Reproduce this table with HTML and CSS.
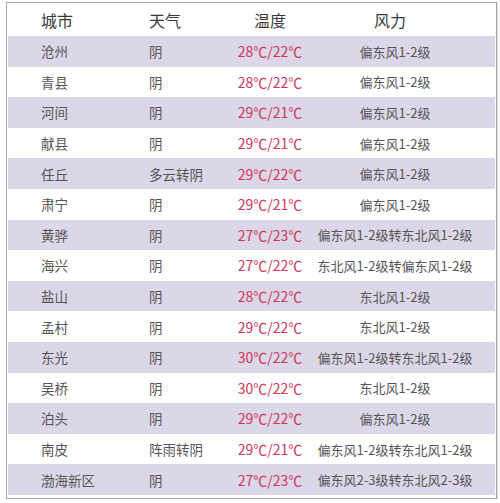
FILE: index.html
```html
<!DOCTYPE html>
<html lang="zh">
<head>
<meta charset="utf-8">
<link rel="stylesheet" href="styles.css">
</head>
<body>
<div class="table">
  <div class="row head">
    <div class="c1">城市</div><div class="c2">天气</div><div class="c3">温度</div><div class="c4">风力</div>
  </div>
  <div class="row alt"><div class="c1">沧州</div><div class="c2">阴</div><div class="c3 t">28℃/22℃</div><div class="c4">偏东风1-2级</div></div>
  <div class="row"><div class="c1">青县</div><div class="c2">阴</div><div class="c3 t">28℃/22℃</div><div class="c4">偏东风1-2级</div></div>
  <div class="row alt"><div class="c1">河间</div><div class="c2">阴</div><div class="c3 t">29℃/21℃</div><div class="c4">偏东风1-2级</div></div>
  <div class="row"><div class="c1">献县</div><div class="c2">阴</div><div class="c3 t">29℃/21℃</div><div class="c4">偏东风1-2级</div></div>
  <div class="row alt"><div class="c1">任丘</div><div class="c2">多云转阴</div><div class="c3 t">29℃/22℃</div><div class="c4">偏东风1-2级</div></div>
  <div class="row"><div class="c1">肃宁</div><div class="c2">阴</div><div class="c3 t">29℃/21℃</div><div class="c4">偏东风1-2级</div></div>
  <div class="row alt"><div class="c1">黄骅</div><div class="c2">阴</div><div class="c3 t">27℃/23℃</div><div class="c4">偏东风1-2级转东北风1-2级</div></div>
  <div class="row"><div class="c1">海兴</div><div class="c2">阴</div><div class="c3 t">27℃/22℃</div><div class="c4">东北风1-2级转偏东风1-2级</div></div>
  <div class="row alt"><div class="c1">盐山</div><div class="c2">阴</div><div class="c3 t">28℃/22℃</div><div class="c4">东北风1-2级</div></div>
  <div class="row"><div class="c1">孟村</div><div class="c2">阴</div><div class="c3 t">29℃/22℃</div><div class="c4">东北风1-2级</div></div>
  <div class="row alt"><div class="c1">东光</div><div class="c2">阴</div><div class="c3 t">30℃/22℃</div><div class="c4">偏东风1-2级转东北风1-2级</div></div>
  <div class="row"><div class="c1">吴桥</div><div class="c2">阴</div><div class="c3 t">30℃/22℃</div><div class="c4">东北风1-2级</div></div>
  <div class="row alt"><div class="c1">泊头</div><div class="c2">阴</div><div class="c3 t">29℃/22℃</div><div class="c4">偏东风1-2级</div></div>
  <div class="row"><div class="c1">南皮</div><div class="c2">阵雨转阴</div><div class="c3 t">29℃/21℃</div><div class="c4">偏东风1-2级转东北风1-2级</div></div>
  <div class="row alt"><div class="c1">渤海新区</div><div class="c2">阴</div><div class="c3 t">27℃/23℃</div><div class="c4">偏东风2-3级转东北风2-3级</div></div>
</div>
</body>
</html>
```
FILE: styles.css
```css
html, body {
  margin: 0;
  padding: 0;
  background: #ffffff;
}
body {
  font-family: "Noto Sans CJK SC", "Noto Sans", sans-serif;
  color: #555;
}
.table {
  margin: 2px 0 0 6px;
  width: 487px;
  height: 495px;
  border: 1px solid #a4a4a4;
  box-shadow: 1px 1px 1px rgba(0,0,0,0.12);
  display: flex;
  flex-direction: column;
  padding: 0 1px;
  box-sizing: content-box;
}
.row {
  display: grid;
  grid-template-columns: 133px 84px 90px 1fr;
  align-items: center;
  height: 30.6px;
  font-size: 13.5px;
  white-space: nowrap;
}
.row.head {
  height: 33px;
  font-size: 16px;
  color: #3a3a3a;
}
.row.alt {
  background: #dcd7e8;
}
.c1 {
  padding-left: 33px;
}
.c2 {
  padding-left: 8px;
}
.c3 {
  text-align: center;
}
.row .t {
  font-size: 14px;
  color: #cf3657;
}
.c4 {
  text-align: center;
  padding-right: 20px;
}
.row .c4 {
  font-size: 13px;
}
.row.head .c4 {
  font-size: 16px;
  padding-right: 30px;
}
```
